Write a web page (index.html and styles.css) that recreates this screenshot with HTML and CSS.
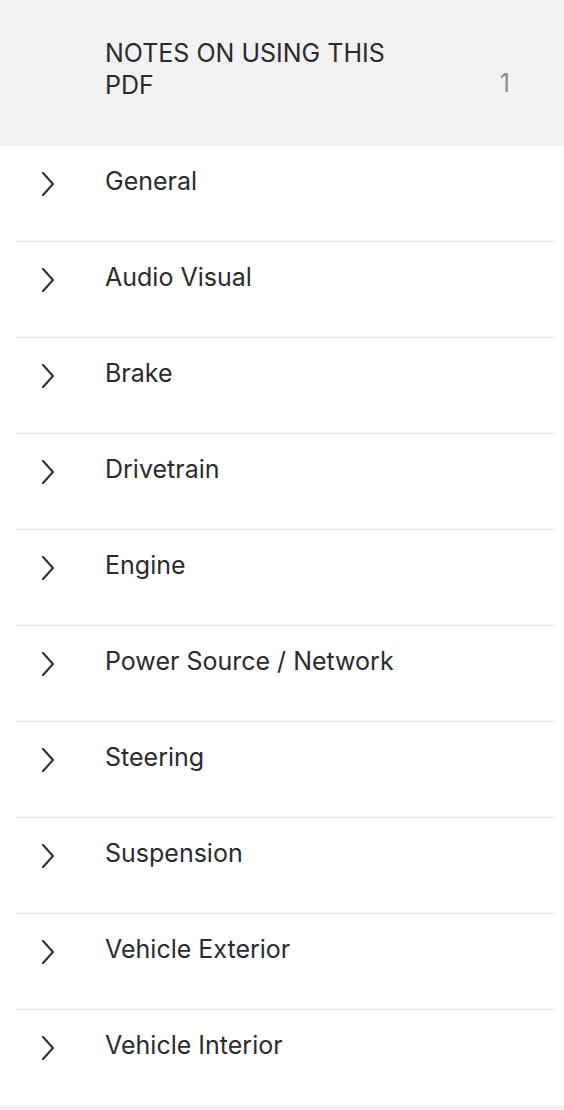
FILE: index.html
```html
<!DOCTYPE html>
<html lang="en">
<head>
    <meta charset="UTF-8">
    <meta name="viewport" content="width=device-width, initial-scale=1.0">
    <title>Contents</title>
    <link rel="stylesheet" href="styles.css">
</head>
<body>
    <div class="toc">
        <div class="toc-header">
            <span class="toc-title">NOTES ON USING THIS PDF</span>
            <span class="toc-page">1</span>
        </div>
        <ul class="toc-list">
            <li class="toc-item"><svg class="chevron" viewBox="0 0 14 26"><path d="M2 2 L12 13 L2 24"/></svg><span>General</span></li>
            <li class="toc-item"><svg class="chevron" viewBox="0 0 14 26"><path d="M2 2 L12 13 L2 24"/></svg><span>Audio Visual</span></li>
            <li class="toc-item"><svg class="chevron" viewBox="0 0 14 26"><path d="M2 2 L12 13 L2 24"/></svg><span>Brake</span></li>
            <li class="toc-item"><svg class="chevron" viewBox="0 0 14 26"><path d="M2 2 L12 13 L2 24"/></svg><span>Drivetrain</span></li>
            <li class="toc-item"><svg class="chevron" viewBox="0 0 14 26"><path d="M2 2 L12 13 L2 24"/></svg><span>Engine</span></li>
            <li class="toc-item"><svg class="chevron" viewBox="0 0 14 26"><path d="M2 2 L12 13 L2 24"/></svg><span>Power Source / Network</span></li>
            <li class="toc-item"><svg class="chevron" viewBox="0 0 14 26"><path d="M2 2 L12 13 L2 24"/></svg><span>Steering</span></li>
            <li class="toc-item"><svg class="chevron" viewBox="0 0 14 26"><path d="M2 2 L12 13 L2 24"/></svg><span>Suspension</span></li>
            <li class="toc-item"><svg class="chevron" viewBox="0 0 14 26"><path d="M2 2 L12 13 L2 24"/></svg><span>Vehicle Exterior</span></li>
            <li class="toc-item"><svg class="chevron" viewBox="0 0 14 26"><path d="M2 2 L12 13 L2 24"/></svg><span>Vehicle Interior</span></li>
        </ul>
        <div class="toc-footer"></div>
    </div>
</body>
</html>
```

FILE: styles.css
```css
body {
    font-family: Inter, "Liberation Sans", sans-serif;
    background-color: #fff;
    color: #2b2b2e;
    margin: 0;
    padding: 0;
}

.toc {
    width: 564px;
}

.toc-header {
    display: flex;
    align-items: flex-start;
    height: 146px;
    box-sizing: border-box;
    padding: 37px 54px 0 105px;
    background-color: #f2f2f2;
    font-size: 25px;
    line-height: 32px;
}

.toc-title {
    width: 300px;
}

.toc-page {
    margin-left: auto;
    margin-top: 30px;
    color: #8e8e8e;
}

.toc-list {
    list-style: none;
    margin: 0;
    padding: 0;
}

.toc-item {
    display: flex;
    align-items: flex-start;
    height: 96px;
    box-sizing: border-box;
    margin: 0 10px 0 16px;
    padding-top: 19px;
    border-bottom: 1px solid #e4e4e4;
    font-size: 25px;
    line-height: 32px;
}

.toc-item:last-child {
    border-bottom: none;
}

.chevron {
    width: 14px;
    height: 26px;
    margin: 6px 50px 0 25px;
    fill: none;
    stroke: #2b2b2e;
    stroke-width: 2;
    stroke-linecap: round;
    stroke-linejoin: round;
}

.toc-footer {
    height: 10px;
    background-color: #f2f2f2;
    border-top: 1px solid #e8e8e8;
}
```
